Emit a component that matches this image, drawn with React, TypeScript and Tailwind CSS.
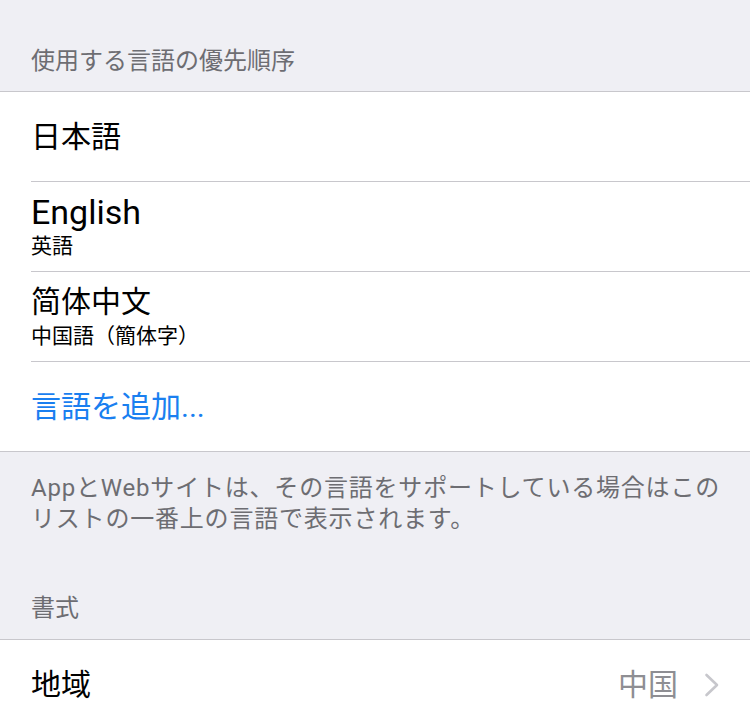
const languages = [
  { name: '日本語', sub: '', latin: false },
  { name: 'English', sub: '英語', latin: true },
  { name: '简体中文', sub: '中国語（簡体字）', latin: false },
];

export default function App() {
  return (
    <div className="w-[750px] h-[720px] overflow-hidden bg-[#efeff4] font-['Roboto','Noto_Sans_CJK_JP',sans-serif]">
      {/* Preferred language order */}
      <div className="h-[91px] flex items-end px-[31px] pb-[14px]">
        <span className="text-[24px] leading-[31px] text-[#6d6d72]">使用する言語の優先順序</span>
      </div>

      <div className="bg-white border-y border-[#c8c7cc]">
        {languages.map((lang) => (
          <div key={lang.name} className="pl-[31px]">
            <div className="h-[90px] flex flex-col justify-center border-b border-[#c8c7cc]">
              <span className={`${lang.latin ? 'text-[34px]' : 'text-[30px]'} leading-[34px] text-black`}>
                {lang.name}
              </span>
              {lang.sub && <span className="mt-[4px] text-[21px] leading-[26px] text-black">{lang.sub}</span>}
            </div>
          </div>
        ))}
        <div className="h-[89px] flex items-center pl-[31px]">
          <span className="text-[30px] text-[#1a7ff0]">言語を追加...</span>
        </div>
      </div>

      <div className="pl-[31px] pt-[21px] text-[24px] leading-[31px] tracking-[0.8px] whitespace-nowrap text-[#6d6d72]">
        <p>AppとWebサイトは、その言語をサポートしている場合はこの</p>
        <p>リストの一番上の言語で表示されます。</p>
      </div>

      {/* Format */}
      <div className="h-[104px] flex items-end px-[31px] pb-[15px]">
        <span className="text-[24px] leading-[31px] text-[#6d6d72]">書式</span>
      </div>

      <div className="bg-white border-t border-[#c8c7cc]">
        <div className="h-[89px] flex items-center justify-between pl-[31px] pr-[30px]">
          <span className="text-[30px] text-black">地域</span>
          <div className="flex items-center gap-[26px]">
            <span className="text-[30px] text-[#8e8e93]">中国</span>
            <svg width="16" height="24" viewBox="0 0 16 24" fill="none">
              <path d="M2.5 2 L13 12 L2.5 22" stroke="#c7c7cc" strokeWidth="2.6" strokeLinecap="round" strokeLinejoin="round" />
            </svg>
          </div>
        </div>
      </div>
    </div>
  );
}
